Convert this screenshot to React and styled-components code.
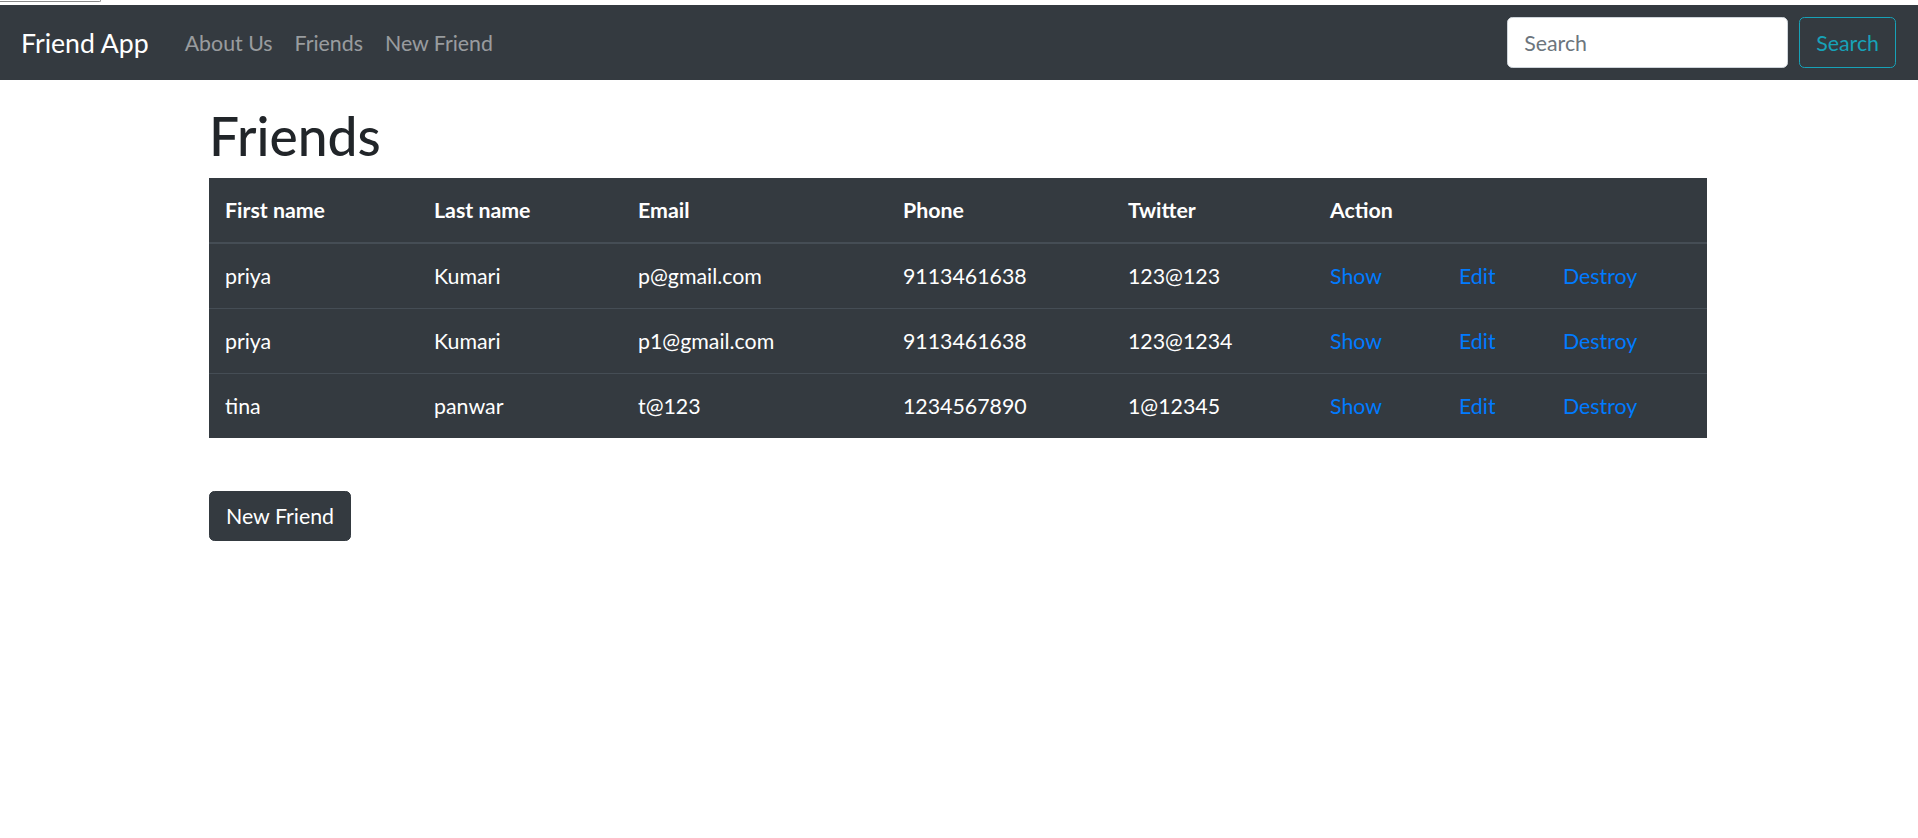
import React from "react";
import styled, { createGlobalStyle } from "styled-components";

const GlobalStyle = createGlobalStyle`
  html, body {
    margin: 0;
    padding: 0;
    background: #ffffff;
    font-family: "Lato", "Open Sans", "Liberation Sans", sans-serif;
    font-size: 21.33px;
    line-height: 1.5;
    color: #212529;
  }
  * {
    box-sizing: border-box;
  }
`;

// leftover bit of browser chrome at the very top
const TopStrip = styled.div`
  height: 5px;
  background: #ffffff;
`;

const Stub = styled.div`
  width: 101px;
  height: 2px;
  border-bottom: 1px solid #8a8a8a;
  border-right: 1px solid #8a8a8a;
  border-bottom-right-radius: 3px;
`;

const Nav = styled.nav`
  display: flex;
  align-items: center;
  justify-content: space-between;
  background-color: #343a40;
  padding: 12px 22px 12px 21px;
  height: 75px;
`;

const NavLeft = styled.div`
  display: flex;
  align-items: center;
`;

const Brand = styled.a`
  color: #ffffff;
  font-size: 26.67px;
  line-height: 40px;
  text-decoration: none;
  margin-right: 25px;
`;

const NavLink = styled.a`
  color: rgba(255, 255, 255, 0.5);
  text-decoration: none;
  padding: 0 11px;
  font-size: 21.33px;
  line-height: 32px;
`;

const SearchForm = styled.form`
  display: flex;
  align-items: center;
  margin: 0;
`;

const SearchInput = styled.input`
  width: 281px;
  height: 51px;
  padding: 8px 16px;
  font-family: inherit;
  font-size: 21.33px;
  color: #495057;
  background: #ffffff;
  border: 1.33px solid #ced4da;
  border-radius: 5.33px;
  margin-right: 11px;
  outline: none;

  &::placeholder {
    color: #6c757d;
  }
`;

const OutlineButton = styled.button`
  height: 51px;
  padding: 0 16px;
  font-family: inherit;
  font-size: 21.33px;
  color: #17a2b8;
  background: transparent;
  border: 1.33px solid #17a2b8;
  border-radius: 5.33px;
  cursor: pointer;
`;

const Container = styled.main`
  width: 1498px;
  margin: 0 211px 0 209px;
`;

const Title = styled.h1`
  font-size: 53.33px;
  font-weight: 500;
  line-height: 1.2;
  margin: 23px 0 10.67px;
  color: #212529;
`;

const Table = styled.table`
  width: 100%;
  table-layout: fixed;
  border-collapse: collapse;
  background-color: #343a40;
  color: #ffffff;
`;

const Th = styled.th`
  text-align: left;
  font-weight: 700;
  padding: 16px;
  line-height: 32px;
  border-bottom: 2px solid #454d55;
`;

const Td = styled.td`
  padding: 16px;
  line-height: 32px;
  border-top: 1px solid #454d55;
  white-space: nowrap;
`;

const ActionLink = styled.a`
  color: #007bff;
  text-decoration: none;
`;

const DarkButton = styled.button`
  margin-top: 53px;
  padding: 8px 16px;
  font-family: inherit;
  font-size: 21.33px;
  line-height: 32px;
  color: #ffffff;
  background-color: #343a40;
  border: 1.33px solid #343a40;
  border-radius: 5.33px;
  cursor: pointer;
`;

const colWidths = [209, 204, 265, 225, 202, 129, 104, 160];

const friends = [
  { first: "priya", last: "Kumari", email: "p@gmail.com", phone: "9113461638", twitter: "123@123" },
  { first: "priya", last: "Kumari", email: "p1@gmail.com", phone: "9113461638", twitter: "123@1234" },
  { first: "tina", last: "panwar", email: "t@123", phone: "1234567890", twitter: "1@12345" },
];

const App = () => {
  return (
    <>
      <GlobalStyle />
      <TopStrip>
        <Stub />
      </TopStrip>
      <Nav>
        <NavLeft>
          <Brand href="#">Friend App</Brand>
          <NavLink href="#">About Us</NavLink>
          <NavLink href="#">Friends</NavLink>
          <NavLink href="#">New Friend</NavLink>
        </NavLeft>
        <SearchForm onSubmit={(e) => e.preventDefault()}>
          <SearchInput type="search" placeholder="Search" />
          <OutlineButton type="submit">Search</OutlineButton>
        </SearchForm>
      </Nav>

      <Container>
        <Title>Friends</Title>
        <Table>
          <colgroup>
            {colWidths.map((w, i) => (
              <col key={i} style={{ width: w }} />
            ))}
          </colgroup>
          <thead>
            <tr>
              <Th>First name</Th>
              <Th>Last name</Th>
              <Th>Email</Th>
              <Th>Phone</Th>
              <Th>Twitter</Th>
              <Th colSpan={3}>Action</Th>
            </tr>
          </thead>
          <tbody>
            {friends.map((f, i) => (
              <tr key={i}>
                <Td>{f.first}</Td>
                <Td>{f.last}</Td>
                <Td>{f.email}</Td>
                <Td>{f.phone}</Td>
                <Td>{f.twitter}</Td>
                <Td><ActionLink href="#">Show</ActionLink></Td>
                <Td><ActionLink href="#">Edit</ActionLink></Td>
                <Td><ActionLink href="#">Destroy</ActionLink></Td>
              </tr>
            ))}
          </tbody>
        </Table>
        <DarkButton>New Friend</DarkButton>
      </Container>
    </>
  );
};

export default App;
